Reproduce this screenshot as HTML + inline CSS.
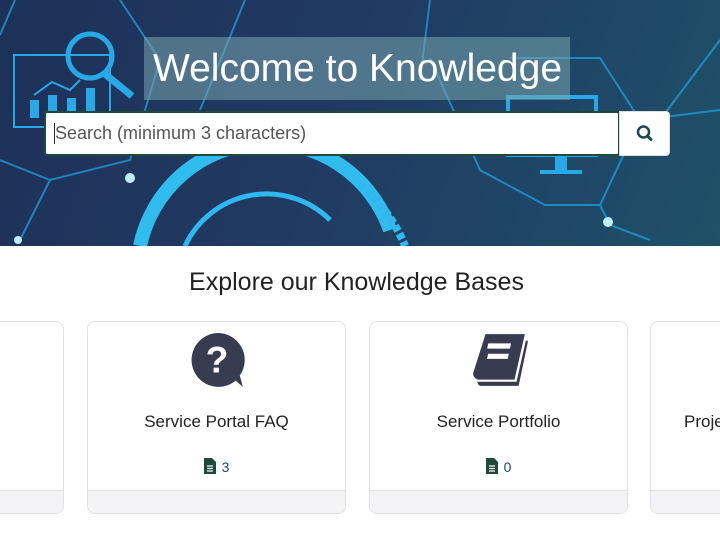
<!DOCTYPE html>
<html><head><meta charset="utf-8"><style>
*{box-sizing:border-box;margin:0;padding:0}
body{width:720px;height:540px;overflow:hidden;background:#fff;font-family:"Liberation Sans",Arial,sans-serif;position:relative}
.hero{position:absolute;left:0;top:0;width:720px;height:246px;background:linear-gradient(110deg,#1d3158 0%,#213a62 45%,#1f4666 75%,#1f5168 100%);overflow:hidden}
.hero svg{position:absolute;left:0;top:0}
.title{position:absolute;left:144px;top:37px;width:426px;height:63px;background:rgba(120,165,175,0.55);color:#fff;font-size:39px;line-height:63px;padding-left:9px;white-space:nowrap}
.search{position:absolute;left:44px;top:111px;width:576px;height:45px;background:#fff;border:2px solid #1d4a3a;border-radius:3px;font-size:18px;color:#555;line-height:41px;padding-left:9px}
.search:before{content:"";position:absolute;left:8px;top:10px;width:1px;height:21px;background:#222}
.btn{position:absolute;left:619px;top:111px;width:51px;height:45px;background:#fff;border-radius:0 4px 4px 0;border:1px solid #ddd}
h2{position:absolute;left:0;width:713px;top:268px;text-align:center;font-weight:normal;font-size:25px;color:#222}
.card{position:absolute;top:321px;height:193px;width:259px;border:1px solid #e2e2e6;border-radius:8px;background:#fff;overflow:hidden}
.card .ft{position:absolute;left:0;right:0;bottom:0;height:23px;background:#f3f3f6;border-top:1px solid #e2e2e6}
.card .nm{position:absolute;left:0;right:0;top:90px;text-align:center;font-size:17px;color:#222}
.card .ct{position:absolute;left:0;right:0;top:136px;text-align:center;font-size:14px;color:#1a4d5a}
.card .ic{position:absolute;top:10px;left:50%;margin-left:-29px}
.doc{display:inline-block;vertical-align:-2px;margin-right:6px}
</style></head><body>
<div class="hero">
<svg width="720" height="246" viewBox="0 0 720 246" fill="none" stroke="#1ea6e6" stroke-width="2">
<g opacity="0.7">
<path d="M0 35 L15 0 M120 0 L160 60 L130 160 L50 180 L0 160"/>
<path d="M50 180 L20 240"/>
<path d="M245 0 L200 110"/>
<path d="M420 80 L430 0"/>
<path d="M430 58 L480 170 L545 205 L600 205 L640 120 L600 58 L510 58"/>
<path d="M640 120 L720 110"/>
<path d="M600 205 L610 225 L650 240"/>
<path d="M660 120 L720 40"/>
</g>
<g stroke="#27a9e8">
<rect x="14" y="55" width="96" height="72"/>
<circle cx="90" cy="56" r="22" stroke-width="5"/>
<path d="M105 74 L132 96" stroke-width="7"/>
<path d="M34 95 L52 82 L70 90 L80 80"/>
</g>
<g fill="#27a9e8" stroke="none">
<rect x="30" y="100" width="9" height="18"/><rect x="48" y="95" width="9" height="23"/><rect x="67" y="98" width="9" height="20"/><rect x="86" y="88" width="9" height="30"/>
<rect x="540" y="170" width="42" height="4"/><rect x="555" y="155" width="12" height="16"/>
</g>
<rect x="508" y="97" width="88" height="58" stroke="#27a9e8" stroke-width="4"/>
<g stroke="#33c3f5" stroke-width="14" opacity="0.95">
<path d="M140 246 A130 130 0 0 1 390 230"/>
</g>
<g stroke="#2fb8f0" stroke-width="5">
<path d="M185 246 A90 90 0 0 1 330 220"/>
<path d="M360 185 A150 150 0 0 1 405 246" stroke-width="8" stroke-dasharray="6 3"/>
</g>
<g fill="#bfefff" stroke="none">
<circle cx="130" cy="178" r="5"/><circle cx="18" cy="240" r="4"/><circle cx="608" cy="222" r="5"/><circle cx="288" cy="120" r="6" opacity=".5"/>
</g>
</svg>
<div class="title">Welcome to Knowledge</div>
<div class="search">Search (minimum 3 characters)</div>
<div class="btn"><svg width="51" height="43" viewBox="0 0 51 43"><circle cx="23.5" cy="20" r="5.5" fill="none" stroke="#1d4a4a" stroke-width="2.5"/><path d="M27.5 24 L31 27.5" stroke="#1d4a4a" stroke-width="3" stroke-linecap="round"/></svg></div>
</div>
<h2>Explore our Knowledge Bases</h2>
<div class="card" style="left:-195px"><div class="ft"></div></div>
<div class="card" style="left:87px">
<svg class="ic" width="58" height="58" viewBox="0 0 56 56"><path d="M28 1 A26 26 0 1 0 46 47 L53 53 L50 42 A26 26 0 0 0 28 1Z" fill="#383c51"/><text x="28" y="39" text-anchor="middle" font-family="Liberation Sans" font-weight="bold" font-size="36" fill="#fff">?</text></svg>
<div class="nm">Service Portal FAQ</div>
<div class="ct"><svg class="doc" width="12" height="16" viewBox="0 0 12 16"><path d="M0 0H8L12 4V16H0Z" fill="#1d4a3a"/><path d="M3 8H9M3 10.5H9M3 13H9" stroke="#fff" stroke-width="1.2"/></svg>3</div>
<div class="ft"></div></div>
<div class="card" style="left:369px">
<svg class="ic" width="60" height="58" viewBox="0 0 56 56"><path d="M14 2 H52 L42 46 H8 A6 6 0 0 1 2 40 Z" fill="#383c51"/><path d="M6 48 H44 L53 8 L55 9 L46 52 H9 A5 5 0 0 1 6 48Z" fill="#383c51"/><rect x="19" y="11" width="22" height="5" fill="#fff" transform="skewX(-12)"/><rect x="21" y="21" width="20" height="5" fill="#fff" transform="skewX(-12)"/></svg>
<div class="nm">Service Portfolio</div>
<div class="ct"><svg class="doc" width="12" height="16" viewBox="0 0 12 16"><path d="M0 0H8L12 4V16H0Z" fill="#1d4a3a"/><path d="M3 8H9M3 10.5H9M3 13H9" stroke="#fff" stroke-width="1.2"/></svg>0</div>
<div class="ft"></div></div>
<div class="card" style="left:650px">
<div class="nm" style="text-align:left;left:33px">Project</div>
<div class="ft"></div></div>
</body></html>
